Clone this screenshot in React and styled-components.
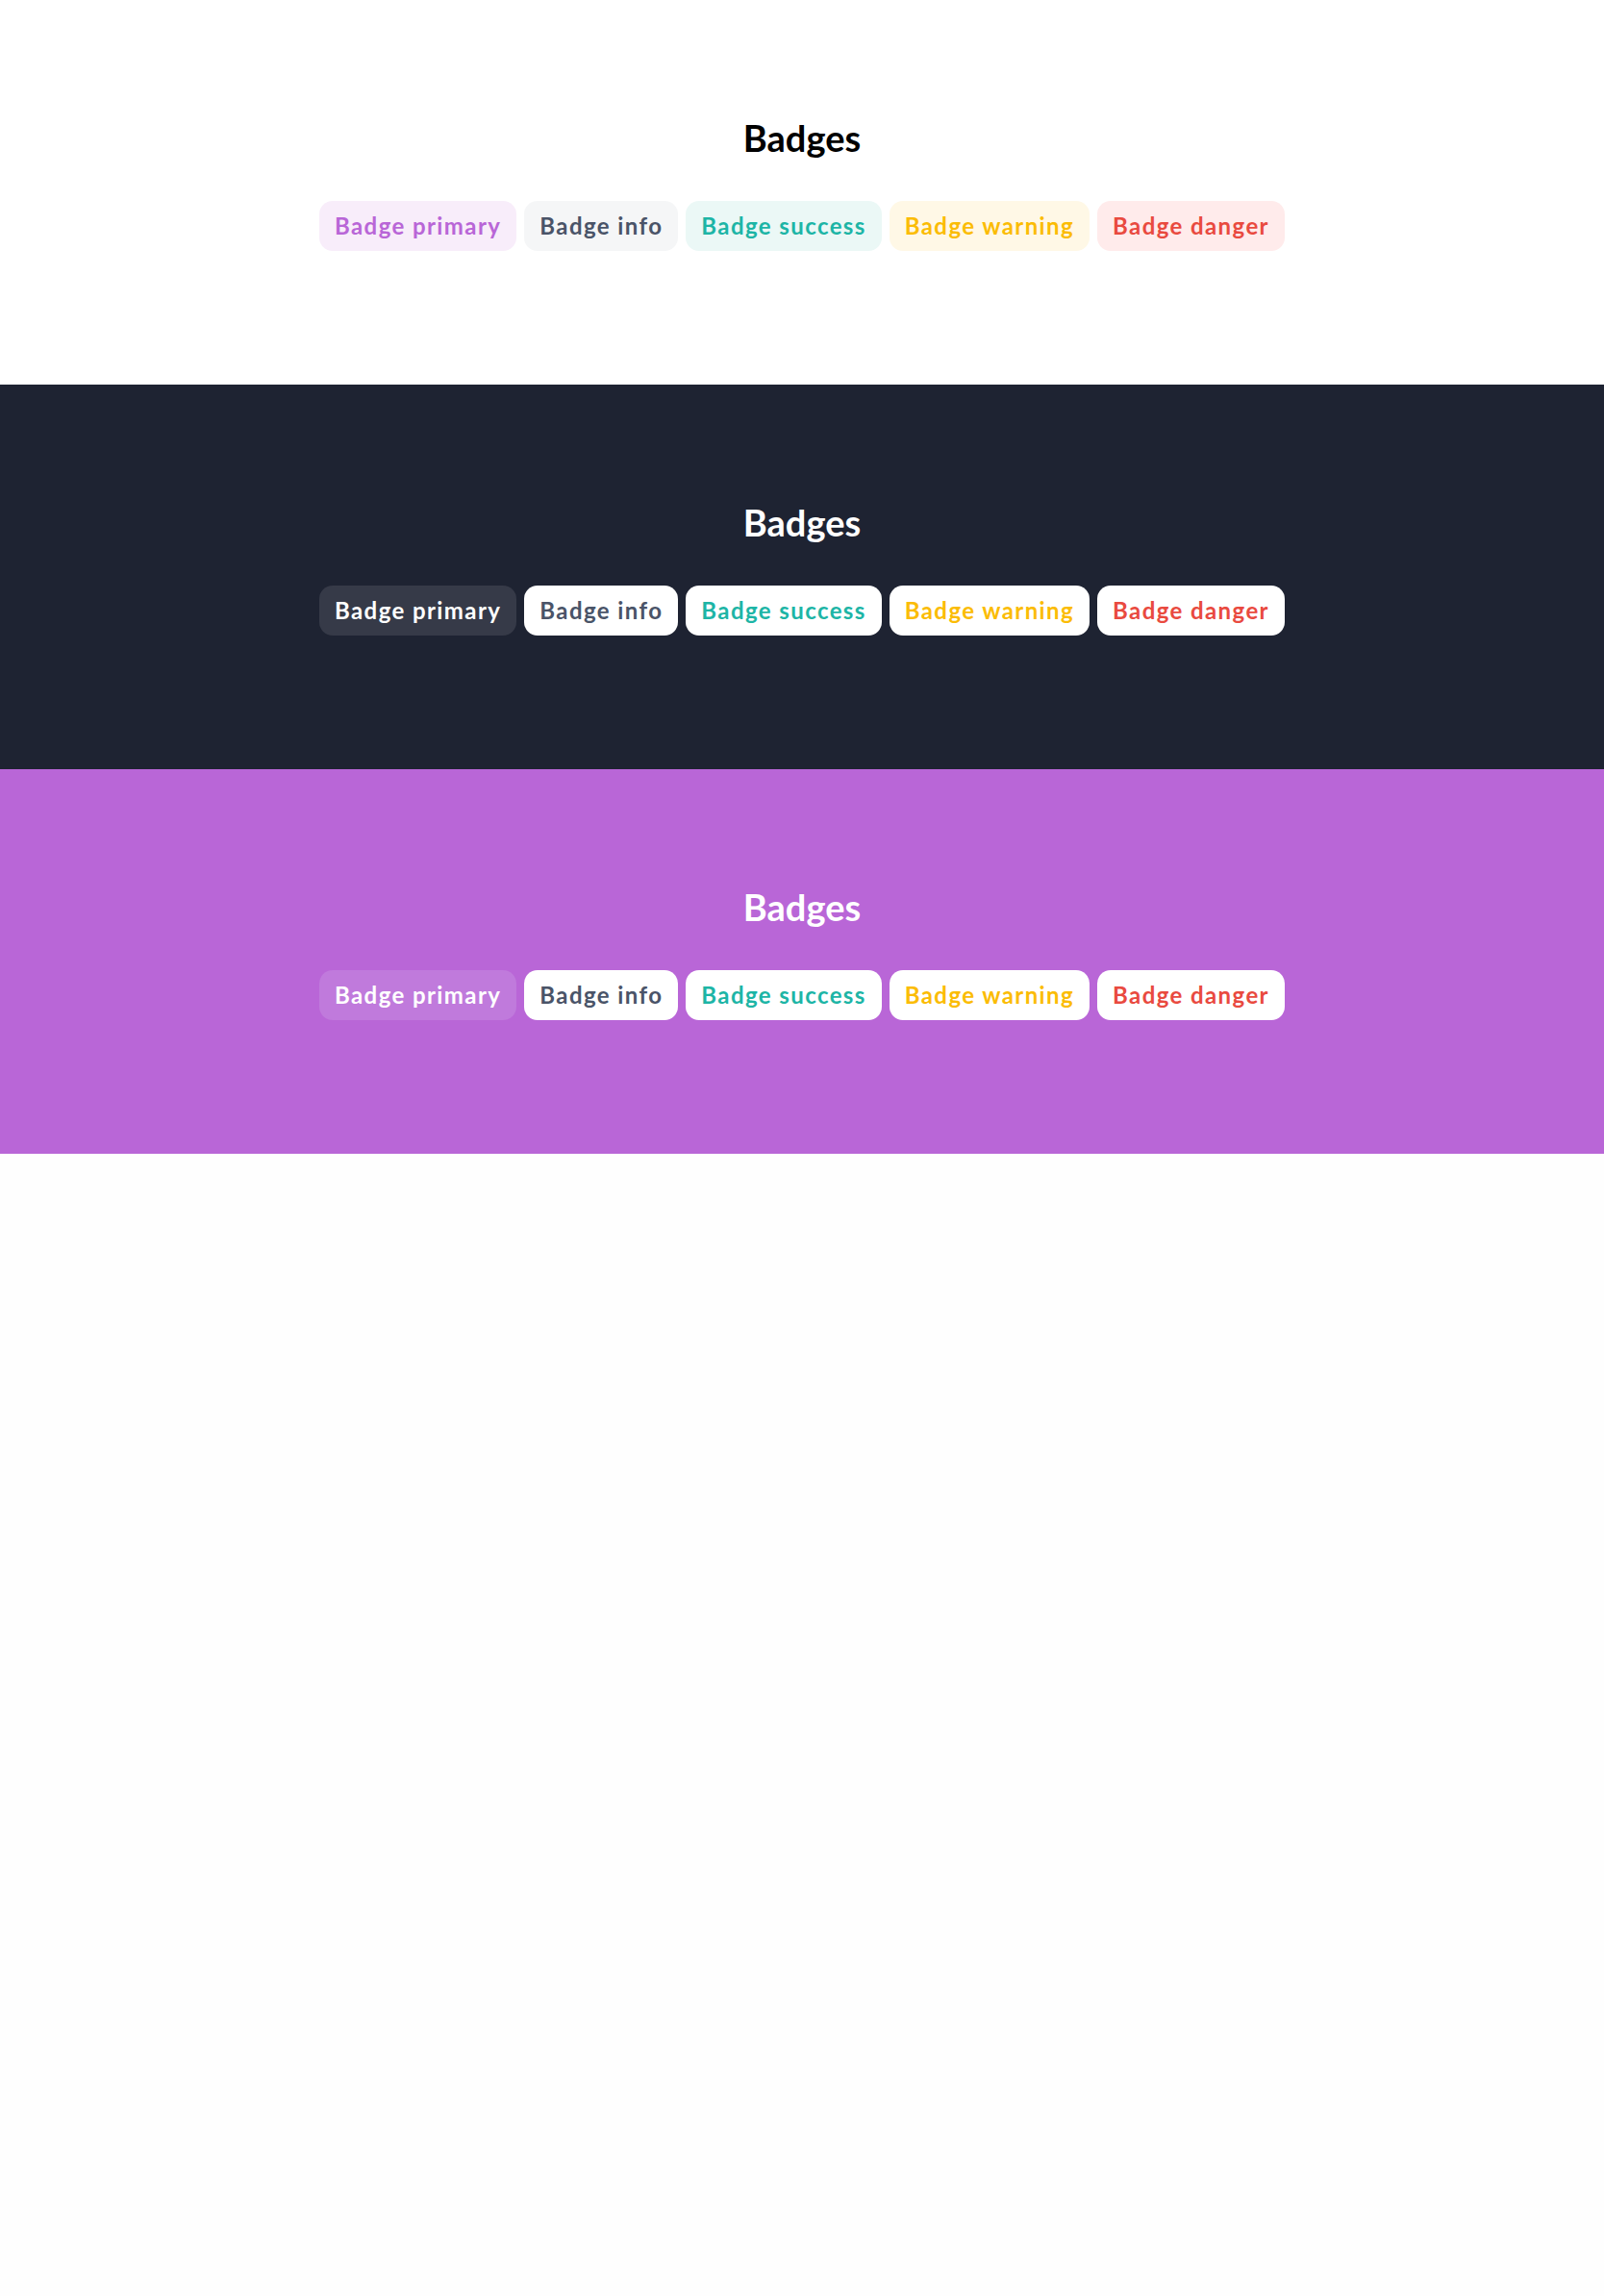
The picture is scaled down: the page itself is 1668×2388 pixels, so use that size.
import React from "react";
import styled, { createGlobalStyle } from "styled-components";

const Global = createGlobalStyle`
  html, body { margin: 0; padding: 0; background: #fefefe; }
  body { font-family: "Lato", "Noto Sans", sans-serif; }
`;

const themes = {
  light: {
    bg: "#ffffff",
    title: "#000000",
    primaryBg: "#f8edfa",
    primaryFg: "#b966d7",
    otherBg: null,
  },
  dark: {
    bg: "#1e2332",
    title: "#ffffff",
    primaryBg: "#363a48",
    primaryFg: "#ffffff",
    otherBg: "#ffffff",
  },
  purple: {
    bg: "#b966d7",
    title: "#ffffff",
    primaryBg: "#c07adc",
    primaryFg: "#ffffff",
    otherBg: "#ffffff",
  },
};

const variants = {
  info: { bg: "#f5f6f7", fg: "#4a5468" },
  success: { bg: "#ebf8f6", fg: "#1db5a6" },
  warning: { bg: "#fff8e6", fg: "#fbbc05" },
  danger: { bg: "#ffebeb", fg: "#e94a3f" },
};

const Section = styled.section`
  box-sizing: border-box;
  height: 400px;
  background: ${(p) => p.$bg};
  padding-top: 121px;
  display: flex;
  flex-direction: column;
  align-items: center;
`;

const Title = styled.h2`
  margin: 0 0 42px;
  font-size: 38px;
  line-height: 1.2;
  font-weight: 700;
  color: ${(p) => p.$color};
`;

const Row = styled.div`
  display: flex;
  gap: 8px;
`;

const Badge = styled.span`
  box-sizing: border-box;
  height: 52px;
  display: inline-flex;
  align-items: center;
  padding: 0 16px;
  border-radius: 14px;
  font-size: 24px;
  font-weight: 700;
  letter-spacing: 1.4px;
  background: ${(p) => p.$bg};
  color: ${(p) => p.$fg};
`;

function Panel({ theme }) {
  const t = themes[theme];
  return (
    <Section $bg={t.bg}>
      <Title $color={t.title}>Badges</Title>
      <Row>
        <Badge $bg={t.primaryBg} $fg={t.primaryFg}>Badge primary</Badge>
        {Object.entries(variants).map(([k, v]) => (
          <Badge key={k} $bg={t.otherBg || v.bg} $fg={v.fg}>
            Badge {k}
          </Badge>
        ))}
      </Row>
    </Section>
  );
}

export default function App() {
  return (
    <>
      <Global />
      <Panel theme="light" />
      <Panel theme="dark" />
      <Panel theme="purple" />
    </>
  );
}
